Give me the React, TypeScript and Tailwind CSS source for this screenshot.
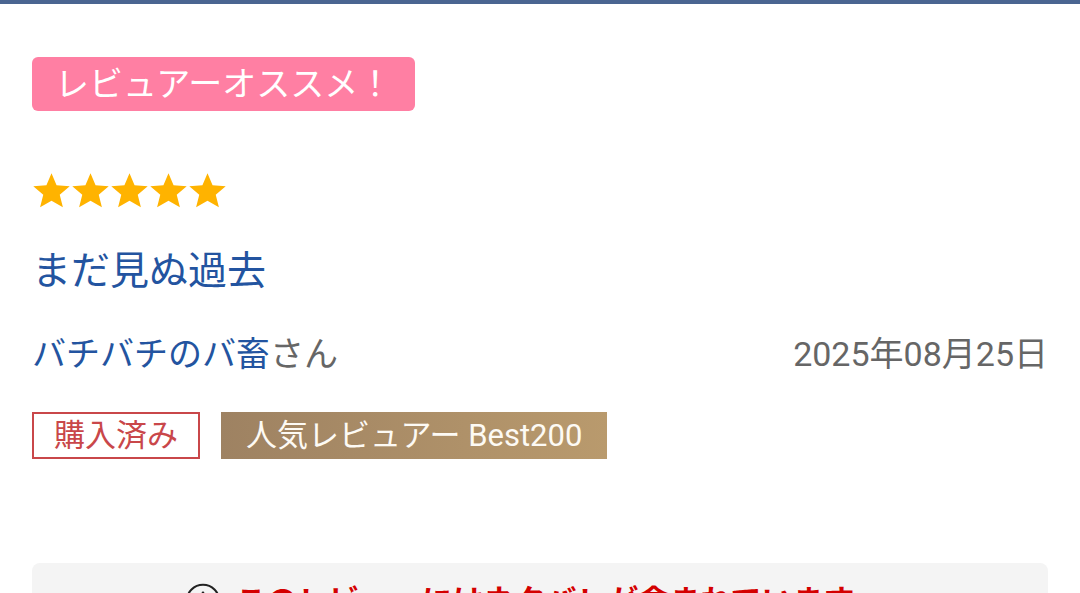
import React from 'react';

const Star: React.FC = () => (
  <svg width="39" height="38" viewBox="0 0 24 24" className="shrink-0">
    <path
      fill="#ffb300"
      d="M12 .8l3.2 7.6 8.3.6-6.3 5.3 2 8L12 18.1l-7.2 4.2 2-8L.5 9l8.3-.6z"
    />
  </svg>
);

const App: React.FC = () => {
  return (
    <div
      className="w-[1080px] h-[593px] overflow-hidden bg-white border-t-4 border-[#4a6591]"
      style={{ fontFamily: "Roboto, 'Noto Sans CJK JP', sans-serif" }}
    >
      <div className="px-[32px] pt-[53px]">
        {/* recommend badge */}
        <div className="flex">
          <span className="h-[54px] leading-[54px] px-[23px] rounded-md bg-[#ff7fa3] text-white text-[34px]">
            レビュアーオススメ！
          </span>
        </div>

        {/* rating */}
        <div className="flex mt-[61px]">
          <Star />
          <Star />
          <Star />
          <Star />
          <Star />
        </div>

        {/* title */}
        <h2 className="mt-[37px] text-[39px] leading-[48px] text-[#2354a0]">まだ見ぬ過去</h2>

        {/* reviewer + date */}
        <div className="mt-[37px] flex items-center justify-between text-[34px] leading-[44px]">
          <div>
            <span className="text-[#2354a0]">バチバチのバ畜</span>
            <span className="text-[#666666]">さん</span>
          </div>
          <span className="text-[#666666]">2025年08月25日</span>
        </div>

        {/* tags */}
        <div className="mt-[36px] flex gap-[21px]">
          <span className="h-[47px] leading-[43px] px-[20px] border-2 border-[#c9474a] text-[#c9474a] text-[31px]">
            購入済み
          </span>
          <span className="h-[47px] leading-[47px] px-[25px] bg-gradient-to-r from-[#9e8262] to-[#b99a6d] text-[#fdfaf4] text-[31px]">
            人気レビュアー Best200
          </span>
        </div>

        {/* spoiler notice */}
        <div className="mt-[104px] h-[120px] rounded-lg bg-[#f4f4f4] flex justify-center pt-[19px] pr-[40px]">
          <div className="flex items-start gap-[14px]">
            <svg width="36" height="36" viewBox="0 0 24 24" className="mt-[1px]">
              <circle cx="12" cy="12" r="10.8" fill="none" stroke="#222" strokeWidth="1.4" />
              <path d="M12 6.5v7" stroke="#222" strokeWidth="1.8" strokeLinecap="round" />
              <circle cx="12" cy="17" r="1.1" fill="#222" />
            </svg>
            <span className="text-[31px] leading-[40px] font-bold text-[#d40000]">
              このレビューにはネタバレが含まれています
            </span>
          </div>
        </div>
      </div>
    </div>
  );
};

export default App;
